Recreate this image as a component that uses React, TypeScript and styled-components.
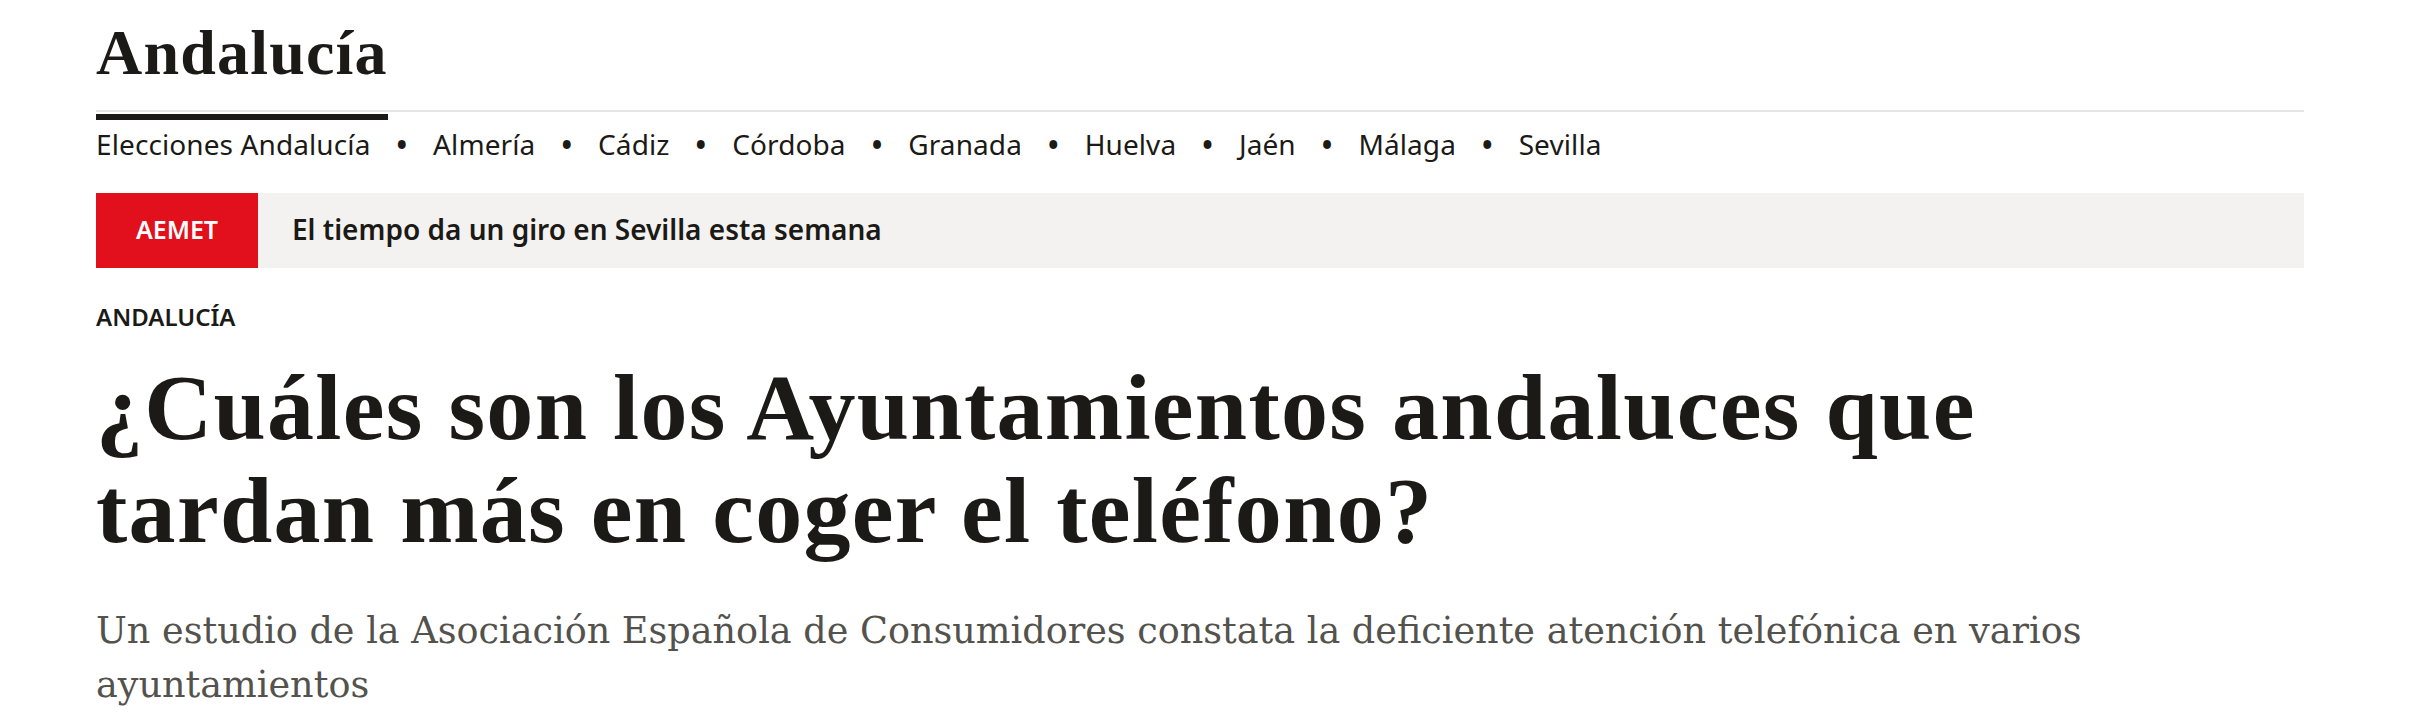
import React from "react";
import styled, { createGlobalStyle } from "styled-components";

const GlobalStyle = createGlobalStyle`
  html, body {
    margin: 0;
    padding: 0;
    background: #ffffff;
  }
  body {
    font-family: "Noto Sans", "Liberation Sans", sans-serif;
    color: #1b1a16;
  }
  * { box-sizing: border-box; }
`;

const Page = styled.div`
  width: 2208px;
  margin-left: 96px;
`;

const Header = styled.header`
  display: flex;
  align-items: flex-end;
  border-bottom: 2px solid #e6e6e6;
`;

const SectionTitle = styled.h1`
  display: inline-block;
  margin: 0 0 -10px 0;
  padding: 21px 0 29px 0;
  font-family: "Liberation Serif", "Times New Roman", serif;
  font-weight: 700;
  font-size: 64px;
  line-height: 64px;
  letter-spacing: 1.2px;
  color: #1b1a16;
  border-bottom: 6px solid #1b1a16;
`;

const NavList = styled.nav`
  display: flex;
  align-items: center;
  gap: 26px;
  padding-top: 12px;
  font-size: 28px;
  line-height: 40px;
  letter-spacing: 0.1px;
`;

const NavItem = styled.a`
  color: #1b1a16;
  text-decoration: none;
  white-space: nowrap;
`;

const Dot = styled.span`
  color: #1b1a16;
  font-size: 28px;
  font-weight: 700;
`;

const Breaking = styled.div`
  display: flex;
  align-items: stretch;
  height: 75px;
  margin-top: 29px;
  background: #f3f2f0;
`;

const Tag = styled.span`
  display: flex;
  align-items: center;
  justify-content: center;
  width: 162px;
  padding-bottom: 4px;
  background: #e20f1c;
  color: #ffffff;
  font-size: 25px;
  font-weight: 600;
`;

const BreakingText = styled.a`
  display: flex;
  align-items: center;
  padding: 0 0 4px 34px;
  font-size: 28px;
  font-weight: 600;
  color: #1b1a16;
  text-decoration: none;
`;

const Kicker = styled.div`
  margin-top: 34px;
  font-size: 24px;
  line-height: 30px;
  font-weight: 600;
  text-transform: uppercase;
  color: #1b1a16;
`;

const Headline = styled.h2`
  max-width: 1980px;
  margin: 24px 0 0 0;
  font-family: "Liberation Serif", "Times New Roman", serif;
  font-weight: 700;
  font-size: 94px;
  line-height: 103px;
  letter-spacing: 1.3px;
  color: #1b1a16;
`;

const Standfirst = styled.p`
  margin: 42px 0 0 0;
  font-family: "DejaVu Serif", "Liberation Serif", serif;
  font-weight: 400;
  font-size: 36.6px;
  line-height: 54px;
  color: #53524d;
`;

const navItems = [
  "Elecciones Andalucía",
  "Almería",
  "Cádiz",
  "Córdoba",
  "Granada",
  "Huelva",
  "Jaén",
  "Málaga",
  "Sevilla",
];

export default function App() {
  return (
    <>
      <GlobalStyle />
      <Page>
        <Header>
          <SectionTitle>Andalucía</SectionTitle>
        </Header>
        <NavList>
          {navItems.map((item, i) => (
            <React.Fragment key={item}>
              {i > 0 && <Dot>•</Dot>}
              <NavItem href="#">{item}</NavItem>
            </React.Fragment>
          ))}
        </NavList>
        <Breaking>
          <Tag>AEMET</Tag>
          <BreakingText href="#">El tiempo da un giro en Sevilla esta semana</BreakingText>
        </Breaking>
        <Kicker>Andalucía</Kicker>
        <Headline>¿Cuáles son los Ayuntamientos andaluces que tardan más en coger el teléfono?</Headline>
        <Standfirst>
          Un estudio de la Asociación Española de Consumidores constata la deficiente atención telefónica en varios ayuntamientos
        </Standfirst>
      </Page>
    </>
  );
}
